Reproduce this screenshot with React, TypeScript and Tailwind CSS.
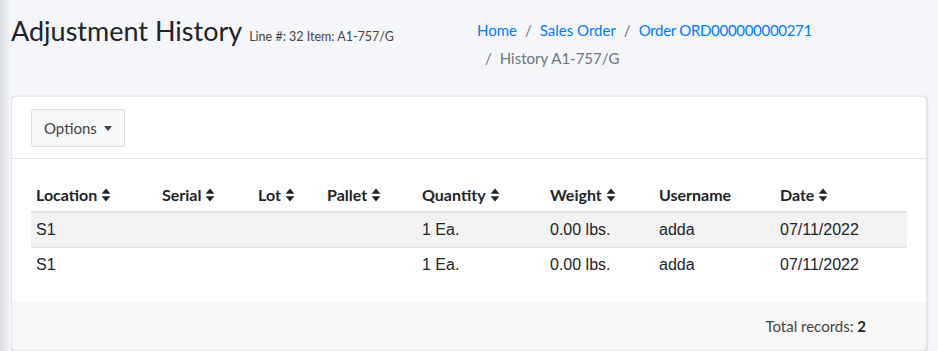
import React from "react";

const SANS = "font-['Lato','Noto_Sans',sans-serif]";

const SortIcon = () => (
  <svg viewBox="0 0 10 16" className="ml-1 inline-block h-[14px] w-[10px] align-[-1px]" fill="currentColor">
    <path d="M5 0.5 L10 6.5 H0 Z" />
    <path d="M5 15.5 L10 9.5 H0 Z" />
  </svg>
);

const columns = [
  { label: "Location", w: "w-[126px]", sort: true },
  { label: "Serial", w: "w-[96px]", sort: true },
  { label: "Lot", w: "w-[69px]", sort: true },
  { label: "Pallet", w: "w-[95px]", sort: true },
  { label: "Quantity", w: "w-[128px]", sort: true },
  { label: "Weight", w: "w-[109px]", sort: true },
  { label: "Username", w: "w-[121px]", sort: false },
  { label: "Date", w: "w-[132px]", sort: true },
];

const rows = [
  ["S1", "", "", "", "1 Ea.", "0.00 lbs.", "adda", "07/11/2022"],
  ["S1", "", "", "", "1 Ea.", "0.00 lbs.", "adda", "07/11/2022"],
];

export default function App() {
  return (
    <div className={`relative h-[351px] w-[938px] overflow-hidden bg-[#f4f6f9] ${SANS} text-[#212529]`}>
      {/* sidebar shadow on the left */}
      <div className="absolute left-0 top-0 h-full w-[11px] bg-gradient-to-r from-[#dcdfe4] to-[#f4f6f9]" />

      <div className="flex pl-[11px] pr-[11px] pt-[14px]">
        <div className="flex w-[458px] items-baseline">
          <h1 className="text-[27px] font-normal leading-[34px] text-[#212529]">Adjustment History</h1>
          <small className="ml-[7px] text-[12.5px] text-[#444]">Line #: 32 Item: A1-757/G</small>
        </div>
        <ol className="flex w-[350px] flex-wrap pl-2 pt-[2px] text-[15px] leading-[28px]">
          <li><a className="text-[#007bff]">Home</a></li>
          <li className="pl-2"><span className="pr-2 text-[#6c757d]">/</span><a className="text-[#007bff]">Sales Order</a></li>
          <li className="pl-2"><span className="pr-2 text-[#6c757d]">/</span><a className="tracking-[-0.3px] text-[#007bff]">Order ORD000000000271</a></li>
          <li className="pl-2 text-[#6c757d]"><span className="pr-2">/</span>History A1-757/G</li>
        </ol>
      </div>

      <div className="mx-[11px] mt-[24px] rounded-[4px] border border-[#e3e6ea] bg-white shadow-[0_0_1px_rgba(0,0,0,0.125),0_1px_3px_rgba(0,0,0,0.15)]">
        <div className="border-b border-[#dee2e6] px-[19px] pb-[11px] pt-[12px]">
          <button className="flex h-[38px] items-center rounded-[3px] border border-[#dcdcdc] bg-[#f8f9fa] px-[12px] text-[15px] text-[#444]">
            Options
            <svg viewBox="0 0 10 6" className="ml-[7px] h-[5px] w-[8px]" fill="currentColor">
              <path d="M0 0 H10 L5 6 Z" />
            </svg>
          </button>
        </div>

        <div className="px-[19px] pb-[20px] pt-[20px]">
          <table className="w-[876px] table-fixed border-collapse">
            <thead>
              <tr className="border-b-2 border-[#dee2e6]">
                {columns.map((c) => (
                  <th key={c.label} className={`${c.w} h-[33px] px-[5px] text-left text-[16px] font-bold text-[#212529]`}>
                    {c.label}
                    {c.sort && <SortIcon />}
                  </th>
                ))}
              </tr>
            </thead>
            <tbody className="font-['Liberation_Sans',Arial,sans-serif] text-[16px] text-[#212529]">
              {rows.map((r, i) => (
                <tr key={i} className={`border-b border-[#dee2e6] last:border-b-0 ${i % 2 === 0 ? "bg-[#f2f2f2]" : "bg-white"}`}>
                  {r.map((v, j) => (
                    <td key={j} className="h-[35px] px-[5px]">{v}</td>
                  ))}
                </tr>
              ))}
            </tbody>
          </table>
        </div>

        <div className="flex h-[48px] items-center justify-end rounded-b-[4px] bg-[#f7f7f7] pr-[60px] text-[15px] text-[#444]">
          Total records:&nbsp;<b className="text-[#212529]">2</b>
        </div>
      </div>
    </div>
  );
}
